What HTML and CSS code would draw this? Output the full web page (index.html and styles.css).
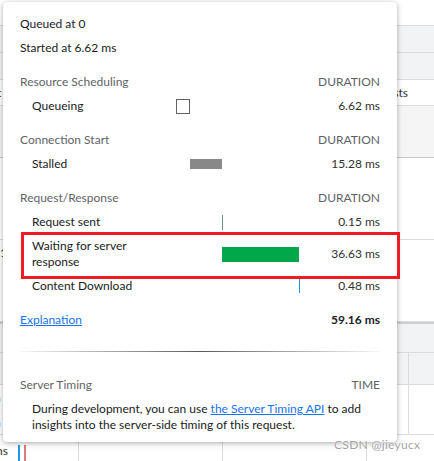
FILE: index.html
```html
<!DOCTYPE html>
<html>
<head>
<meta charset="utf-8">
<link rel="stylesheet" href="styles.css">
</head>
<body>
<div class="panel">
  <div class="bg-row r26"></div>
  <div class="bg-row r27 gray"></div>
  <div class="bg-row r27 gray"></div>
  <div class="bg-row r26 txt"><span class="left-txt">t</span><span class="right-txt">sts</span></div>
  <div class="bg-row r52 light"></div>
  <div class="bg-row r82"></div>
  <div class="bg-row r82 txt-top"><span class="right-txt num">1100</span></div>
  <div class="bg-row r31 gray thick"></div>
  <div class="bg-row r32 gray vline"></div>
  <div class="bg-row r50 vline"><span class="left-txt n">n<br>n</span></div>
  <div class="bg-row grid-strip"><span class="left-txt ns">ns</span><span class="mark blue"></span><span class="mark red"></span></div>
</div>

<div class="popover">
  <div class="line">Queued at 0</div>
  <div class="line">Started at 6.62 ms</div>

  <div class="timing">
    <div class="sec">Resource Scheduling</div><div class="sec"></div><div class="sec right">DURATION</div>
    <div class="lbl">Queueing</div><div class="tl"><span class="bar queue" style="margin-left:0px;width:14px"></span></div><div class="val">6.62 ms</div>

    <div class="sec">Connection Start</div><div class="sec"></div><div class="sec right">DURATION</div>
    <div class="lbl">Stalled</div><div class="tl"><span class="bar stalled" style="margin-left:14px;width:32px"></span></div><div class="val">15.28 ms</div>

    <div class="sec">Request/Response</div><div class="sec"></div><div class="sec right">DURATION</div>
    <div class="lbl">Request sent</div><div class="tl"><span class="bar sent" style="margin-left:46px;width:1px"></span></div><div class="val">0.15 ms</div>
    <div class="lbl tall">Waiting for server<br>response</div><div class="tl tall"><span class="bar wait" style="margin-left:46px;width:77px"></span></div><div class="val tall">36.63 ms</div>
    <div class="lbl">Content Download</div><div class="tl"><span class="bar download" style="margin-left:123px;width:1px"></span></div><div class="val">0.48 ms</div>
  </div>

  <div class="total">
    <a class="link" href="#">Explanation</a>
    <b>59.16 ms</b>
  </div>

  <div class="divider"></div>

  <div class="server-head">
    <span>Server Timing</span>
    <span>TIME</span>
  </div>
  <p class="server-text">During development, you can use <a class="link" href="#">the Server Timing API</a> to add insights into the server-side timing of this request.</p>

  <div class="highlight"></div>
</div>

<div class="watermark">CSDN @jieyucx</div>
</body>
</html>
```

FILE: styles.css
```css
html, body {
  margin: 0;
  padding: 0;
}
body {
  width: 434px;
  height: 461px;
  overflow: hidden;
  position: relative;
  font-family: Lato, "Open Sans", "Liberation Sans", sans-serif;
  font-size: 12px;
  color: #202124;
  background: #fff;
}

/* background network panel */
.panel {
  display: flex;
  flex-direction: column;
}
.bg-row {
  box-sizing: border-box;
  border-bottom: 1px solid #dcdcdc;
  position: relative;
  display: flex;
  justify-content: space-between;
  align-items: center;
  color: #333;
}
.r26 { height: 26px; }
.r27 { height: 27px; }
.r31 { height: 31px; }
.r32 { height: 32px; }
.r50 { height: 50px; }
.r52 { height: 52px; border-bottom-color: #c8c8c8; }
.r82 { height: 82px; }
.gray { background: #f1f3f4; }
.light { background: #f5f5f5; }
.thick { border-top: 2px solid #cfcfcf; }
.txt-top { align-items: flex-start; }
.left-txt { margin-left: -3px; }
.right-txt { margin-right: 26px; }
.num { margin-top: 5px; margin-right: 0; width: 30px; overflow: hidden; }
.n { line-height: 25px; margin-left: -6px; }
.vline {
  background-image: linear-gradient(#dcdcdc, #dcdcdc);
  background-size: 1px 100%;
  background-position: 408px 0;
  background-repeat: no-repeat;
}
.grid-strip {
  height: 26px;
  border-bottom: none;
  align-items: flex-end;
  justify-content: flex-start;
  background-color: #fff;
  background-image: repeating-linear-gradient(to right, transparent 0, transparent 78px, #dcdcdc 78px, #dcdcdc 79px, transparent 79px, transparent 144px);
}
.grid-strip .ns { margin-left: -4px; margin-bottom: 3px; width: 12px; }
.mark {
  width: 2px;
  height: 16px;
  align-self: flex-end;
}
.mark.blue { background: #1a9bf0; margin-left: 10px; }
.mark.red { background: #d88080; margin-left: 4px; }

/* popover */
.popover {
  position: absolute;
  left: 3px;
  top: 2px;
  width: 394px;
  height: 440px;
  box-sizing: border-box;
  padding: 10px 17px 9px;
  background: #fff;
  border-radius: 4px;
  box-shadow: 0 1px 4px rgba(0, 0, 0, 0.25), 0 2px 8px rgba(0, 0, 0, 0.1);
}
.line {
  height: 24px;
  line-height: 24px;
}

.timing {
  display: grid;
  grid-template-columns: 156px 124px 80px;
}
.sec {
  padding-top: 14px;
  padding-bottom: 4px;
  line-height: 16px;
  color: #5f6368;
}
.right { text-align: right; }
.lbl, .tl, .val {
  height: 24px;
  line-height: 16px;
  box-sizing: border-box;
  padding: 4px 0;
}
.lbl { padding-left: 12px; }
.val { text-align: right; color: #303030; }
.tall { height: 40px; }
.val.tall { padding-top: 12px; }
.tl {
  display: flex;
  align-items: center;
}
.bar {
  display: block;
  flex: none;
}
.bar.queue {
  height: 15px;
  box-sizing: border-box;
  border: 1.5px solid #5f6368;
}
.bar.stalled { height: 10px; background: #888; }
.bar.sent { height: 15px; background: #6b9299; }
.bar.wait { height: 15px; background: #00a84a; }
.bar.download { height: 14px; background: #1f8fd6; }

.total {
  margin-top: 14px;
  line-height: 16px;
  display: flex;
  justify-content: space-between;
}
.total b { font-weight: bold; color: #202124; }
.link {
  color: #1a73e8;
  text-decoration: underline;
}
.divider {
  margin-top: 23px;
  height: 1px;
  background: linear-gradient(to right, rgba(90,90,90,0.05), #5a5a5a 50%, rgba(90,90,90,0.05));
}
.server-head {
  margin-top: 25px;
  line-height: 16px;
  display: flex;
  justify-content: space-between;
  color: #5f6368;
}
.server-text {
  margin: 8px 0 0;
  padding-left: 12px;
  line-height: 16px;
  color: #202124;
}

.highlight {
  position: absolute;
  left: 18px;
  top: 230px;
  width: 379px;
  height: 47px;
  box-sizing: border-box;
  border: 3px solid #ed1c24;
}

.watermark {
  position: absolute;
  left: 334px;
  top: 437px;
  font-size: 12px;
  color: rgba(130, 130, 130, 0.75);
  text-shadow: 0 0 1px #fff, 0 0 2px #fff;
  letter-spacing: 0.3px;
}
```
